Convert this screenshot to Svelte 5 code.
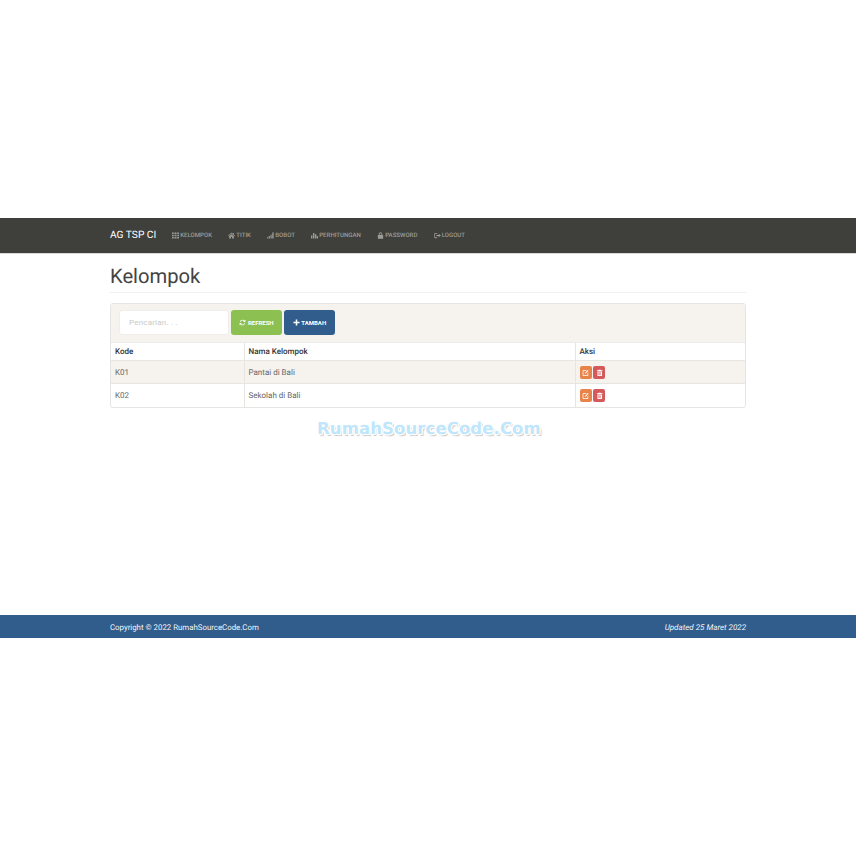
<script>
  const nav = [
    { label: 'KELOMPOK', icon: 'th' },
    { label: 'TITIK', icon: 'home' },
    { label: 'BOBOT', icon: 'signal' },
    { label: 'PERHITUNGAN', icon: 'stats' },
    { label: 'PASSWORD', icon: 'lock' },
    { label: 'LOGOUT', icon: 'logout' }
  ];
  const rows = [
    { kode: 'K01', nama: 'Pantai di Bali' },
    { kode: 'K02', nama: 'Sekolah di Bali' }
  ];
</script>

{#snippet icon(name)}
  <svg class="ico" viewBox="0 0 12 12" aria-hidden="true">
    {#if name === 'th'}
      <path d="M0 1h3v2.6H0zM4.2 1h3.6v2.6H4.2zM9 1h3v2.6H9zM0 4.7h3v2.6H0zM4.2 4.7h3.6v2.6H4.2zM9 4.7h3v2.6H9zM0 8.4h3V11H0zM4.2 8.4h3.6V11H4.2zM9 8.4h3V11H9z" />
    {:else if name === 'home'}
      <path d="M6 1 0 6.5l.7.7L6 2.6l5.3 4.6.7-.7-2-1.8V1.5H8.5v1.6zM2 7.4V11h3V8h2v3h3V7.4L6 3.9z" />
    {:else if name === 'signal'}
      <path d="M0 9h2v2H0zM3 7h2v4H3zM6 4.5h2V11H6zM9 1h2.4v10H9z" />
    {:else if name === 'stats'}
      <path d="M0 6h2.4v5H0zM3.4 1.5h2.4V11H3.4zM6.8 4h2.4v7H6.8zM10 7h2v4h-2z" />
    {:else if name === 'lock'}
      <path d="M3 5V3.6a3 3 0 0 1 6 0V5h1.5v6.5h-9V5zm1.5 0h3V3.6a1.5 1.5 0 0 0-3 0z" />
    {:else if name === 'logout'}
      <path d="M5.5 1.5H1.8A1.3 1.3 0 0 0 .5 2.8v6.4a1.3 1.3 0 0 0 1.3 1.3h3.7V9.2H1.8V2.8h3.7zM8 3v2H4v2h4v2l3.8-3z" />
    {:else if name === 'refresh'}
      <path d="M6 1.2a4.8 4.8 0 0 1 3.5 1.5L11 1.2v4H7l1.6-1.6A3.5 3.5 0 0 0 2.6 5H1.3A4.8 4.8 0 0 1 6 1.2zM1 6.8h4L3.4 8.4a3.5 3.5 0 0 0 6-1.4h1.3a4.8 4.8 0 0 1-8.2 2.3L1 10.8z" />
    {:else if name === 'plus'}
      <path d="M4.7.8h2.6v3.9h3.9v2.6H7.3v3.9H4.7V7.3H.8V4.7h3.9z" />
    {:else if name === 'edit'}
      <path d="M2.2 2h5.3L6.3 3.2H2.5a.4.4 0 0 0-.3.3v6c0 .2.1.3.3.3h6c.2 0 .3-.1.3-.3V6.7L10 5.5v4.3A1.2 1.2 0 0 1 8.8 11H2.2A1.2 1.2 0 0 1 1 9.8V3.2A1.2 1.2 0 0 1 2.2 2zM9.3 1.6l1.2 1.2-4.3 4.4-1.7.5.5-1.7z" />
    {:else if name === 'trash'}
      <path d="M4.3 1h3.4l.4 1H10.5v1.3h-9V2h2.4zM2.3 4h7.4v6.2c0 .5-.4.8-.8.8H3.1a.8.8 0 0 1-.8-.8zM4 5.2v4.6h.8V5.2zm1.6 0v4.6h.8V5.2zm1.6 0v4.6H8V5.2z" />
    {/if}
  </svg>
{/snippet}

<div class="page">
  <nav class="navbar">
    <div class="container nav-inner">
      <span class="brand">AG TSP CI</span>
      <ul class="nav-list">
        {#each nav as item}
          <li>{@render icon(item.icon)}{item.label}</li>
        {/each}
      </ul>
    </div>
  </nav>

  <main class="content">
    <div class="container">
      <h1>Kelompok</h1>
      <section class="panel">
        <div class="toolbar">
          <input class="search" placeholder="Pencarian. . ." />
          <button class="btn green">{@render icon('refresh')}REFRESH</button>
          <button class="btn blue">{@render icon('plus')}TAMBAH</button>
        </div>
        <table>
          <thead>
            <tr>
              <th class="c1">Kode</th>
              <th class="c2">Nama Kelompok</th>
              <th>Aksi</th>
            </tr>
          </thead>
          <tbody>
            {#each rows as row}
              <tr>
                <td>{row.kode}</td>
                <td>{row.nama}</td>
                <td class="actions">
                  <span class="act orange">{@render icon('edit')}</span>
                  <span class="act red">{@render icon('trash')}</span>
                </td>
              </tr>
            {/each}
          </tbody>
        </table>
      </section>
    </div>
    <div class="watermark">RumahSourceCode.Com</div>
  </main>

  <footer>
    <div class="container foot-inner">
      <span>Copyright © 2022 RumahSourceCode.Com</span>
      <em>Updated 25 Maret 2022</em>
    </div>
  </footer>
</div>

<style>
  :global(body) {
    margin: 0;
    background: #fff;
  }

  .page {
    height: 856px;
    padding-top: 218px;
    box-sizing: border-box;
    font-family: Roboto, "Liberation Sans", sans-serif;
    text-rendering: geometricPrecision;
    color: #444;
    overflow: hidden;
  }

  .container {
    width: 636px;
    margin: 0 auto;
  }

  .ico {
    width: 1em;
    height: 1em;
    fill: currentColor;
    flex: none;
  }

  .navbar {
    height: 35px;
    background: #3f403b;
    border-bottom: 1px solid #d8d8d6;
    box-sizing: content-box;
  }

  .nav-inner {
    display: flex;
    align-items: center;
    height: 34px;
  }

  .brand {
    color: #fff;
    font-size: 10.2px;
    width: 62px;
    flex: none;
  }

  .nav-list {
    display: flex;
    gap: 16.1px;
    list-style: none;
    margin: 0;
    padding: 0;
  }

  .nav-list li {
    display: flex;
    align-items: center;
    gap: 1.2px;
    color: #9d9d98;
    font-size: 6.1px;
    font-weight: 500;
  }

  .nav-list .ico {
    width: 7px;
    height: 7px;
  }

  .content {
    position: relative;
    height: 361px;
    padding-top: 10px;
    box-sizing: border-box;
  }

  h1 {
    margin: 0 0 10px;
    height: 28px;
    border-bottom: 1px solid #f0f0ee;
    font-size: 20.2px;
    font-weight: 400;
    line-height: 25px;
    color: #444;
  }

  .panel {
    border: 1px solid #e6e5e1;
    border-radius: 3px;
    overflow: hidden;
  }

  .toolbar {
    display: flex;
    align-items: center;
    height: 38px;
    padding: 0 0 1px 8px;
    box-sizing: border-box;
    background: #f6f3ee;
  }

  .search {
    width: 110px;
    height: 25px;
    box-sizing: border-box;
    padding: 0 9px;
    margin-right: 2px;
    border: 1px solid #f0eeea;
    border-radius: 3px;
    background: #fff;
    font-family: inherit;
    font-size: 8px;
    outline: none;
  }

  .search::placeholder {
    color: #c9c9c6;
    letter-spacing: 0.2px;
  }

  .btn {
    display: flex;
    align-items: center;
    justify-content: center;
    gap: 1.5px;
    height: 25px;
    width: 51px;
    padding: 0;
    margin-right: 2px;
    border: 0;
    border-radius: 3px;
    color: #fff;
    font-family: inherit;
    font-size: 6px;
    font-weight: 700;
  }

  .btn .ico {
    width: 7px;
    height: 7px;
  }

  .green {
    background: #8cc152;
  }

  .blue {
    background: #305d8c;
  }

  table {
    width: 100%;
    border-collapse: collapse;
    table-layout: fixed;
    font-size: 8px;
  }

  .c1 {
    width: 133px;
  }

  .c2 {
    width: 331px;
  }

  th,
  td {
    padding: 0 4px;
    text-align: left;
    box-sizing: border-box;
    border-left: 1px solid #e6e5e1;
  }

  th:first-child,
  td:first-child {
    border-left: 0;
  }

  th {
    font-weight: 500;
    color: #333;
    background: #fff;
    border-top: 1px solid #ecebe7;
    height: 18px;
  }

  td {
    height: 23px;
    color: #666;
    border-top: 1px solid #e6e5e1;
  }

  tbody tr:nth-child(odd) td {
    background: #f6f3ee;
  }

  .act {
    display: inline-flex;
    align-items: center;
    justify-content: center;
    width: 12px;
    height: 13px;
    margin-top: 1px;
    border-radius: 2px;
    color: #fff;
    vertical-align: middle;
  }

  .act .ico {
    width: 7.5px;
    height: 7.5px;
  }

  .orange {
    background: #e8834a;
  }

  .red {
    background: #d4595a;
  }

  /* image watermark sitting over the page */
  .watermark {
    position: absolute;
    top: 164px;
    left: 317px;
    font-family: "DejaVu Sans", sans-serif;
    font-size: 16.5px;
    font-weight: 700;
    line-height: 22px;
    letter-spacing: 0.1px;
    color: #bfe6fb;
    white-space: nowrap;
    text-shadow:
      1px 0 #fff, -1px 0 #fff, 0 1px #fff, 0 -1px #fff,
      1px 1px #fff, -1px -1px #fff, 1px -1px #fff, -1px 1px #fff,
      2px 2px 1px #c9c9c9;
  }

  footer {
    height: 23px;
    background: #305d8c;
    color: #f2f5f8;
    font-size: 7.85px;
  }

  footer em {
    font-size: 8px;
  }

  .foot-inner {
    display: flex;
    justify-content: space-between;
    align-items: center;
    height: 23px;
    padding-top: 1px;
    box-sizing: border-box;
  }
</style>
